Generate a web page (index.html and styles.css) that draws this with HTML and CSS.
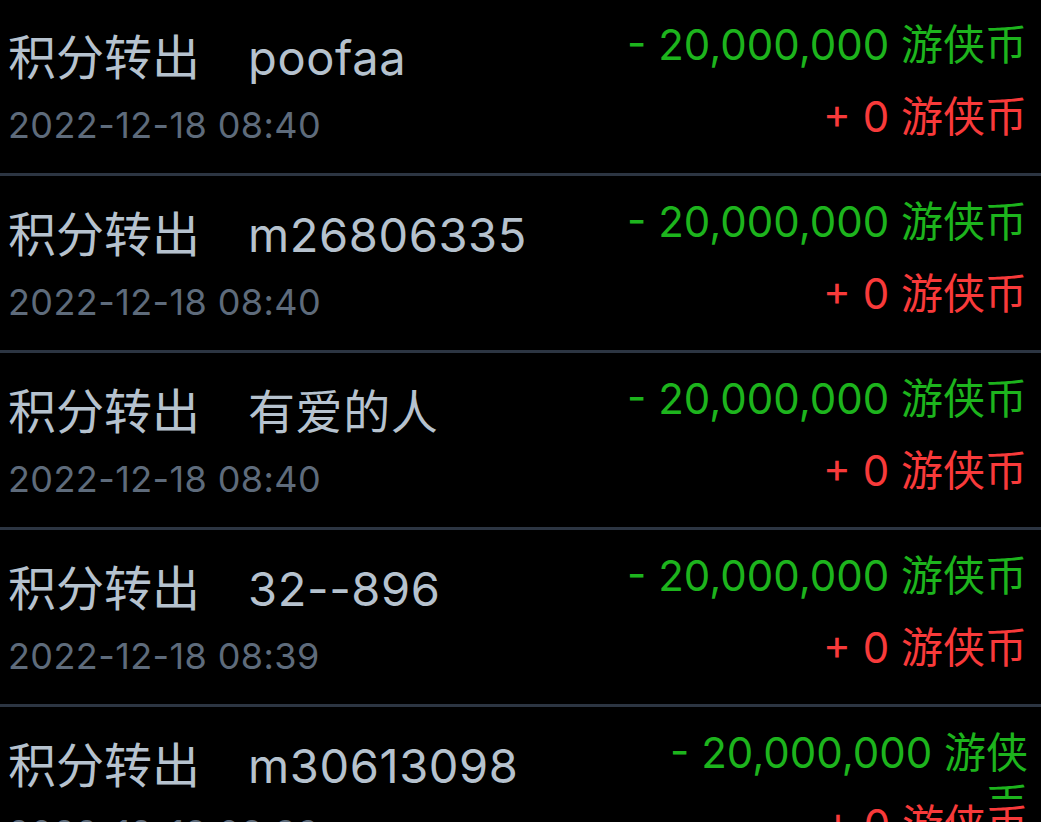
FILE: index.html
```html
<!DOCTYPE html>
<html lang="zh-CN">
<head>
    <meta charset="UTF-8">
    <meta name="viewport" content="width=device-width, initial-scale=1.0">
    <title>积分记录</title>
    <link rel="stylesheet" href="styles.css">
</head>
<body>
    <!-- 积分转出记录 -->
    <div class="record-list">
        <div class="record">
            <div class="record-left">
                <div class="record-title"><span class="record-type">积分转出</span><span class="record-target">poofaa</span></div>
                <div class="record-time">2022-12-18 08:40</div>
            </div>
            <div class="record-right">
                <div class="amount amount-out">- 20,000,000 <span class="coin">游侠币</span></div>
                <div class="amount amount-in">+ 0 <span class="coin">游侠币</span></div>
            </div>
        </div>

        <div class="record">
            <div class="record-left">
                <div class="record-title"><span class="record-type">积分转出</span><span class="record-target">m26806335</span></div>
                <div class="record-time">2022-12-18 08:40</div>
            </div>
            <div class="record-right">
                <div class="amount amount-out">- 20,000,000 <span class="coin">游侠币</span></div>
                <div class="amount amount-in">+ 0 <span class="coin">游侠币</span></div>
            </div>
        </div>

        <div class="record">
            <div class="record-left">
                <div class="record-title"><span class="record-type">积分转出</span><span class="record-target">有爱的人</span></div>
                <div class="record-time">2022-12-18 08:40</div>
            </div>
            <div class="record-right">
                <div class="amount amount-out">- 20,000,000 <span class="coin">游侠币</span></div>
                <div class="amount amount-in">+ 0 <span class="coin">游侠币</span></div>
            </div>
        </div>

        <div class="record">
            <div class="record-left">
                <div class="record-title"><span class="record-type">积分转出</span><span class="record-target">32--896</span></div>
                <div class="record-time">2022-12-18 08:39</div>
            </div>
            <div class="record-right">
                <div class="amount amount-out">- 20,000,000 <span class="coin">游侠币</span></div>
                <div class="amount amount-in">+ 0 <span class="coin">游侠币</span></div>
            </div>
        </div>

        <div class="record record-narrow">
            <div class="record-left">
                <div class="record-title"><span class="record-type">积分转出</span><span class="record-target">m30613098</span></div>
                <div class="record-time">2022-12-18 08:39</div>
            </div>
            <div class="record-right">
                <div class="amount amount-out">- 20,000,000 <span class="coin">游侠币</span></div>
                <div class="amount amount-in">+ 0 <span class="coin">游侠币</span></div>
            </div>
        </div>
    </div>
</body>
</html>
```

FILE: styles.css
```css
html, body {
    overflow: hidden;
}
body {
    margin: 0;
    padding: 0;
    background-color: #000; /* 黑色背景 */
    font-family: Inter, "Noto Sans CJK SC", sans-serif;
}
.record-list {
    margin-top: -1px;
}
.record {
    display: flex;
    justify-content: space-between;
    height: 174px;
    padding: 0 14px 0 8px;
    border-bottom: 3px solid #2c3542; /* 分隔线 */
}
.record-left {
    padding-top: 31px;
}
.record-title {
    color: #b6c2ce;
    font-size: 47px;
    line-height: 56px;
    letter-spacing: 0.6px;
    white-space: nowrap;
}
.record-type {
    font-size: 48px;
    letter-spacing: 0;
    margin-right: 48px;
}
.record-time {
    margin-top: 17px;
    color: #5e6b7b; /* 灰色时间 */
    font-size: 36px;
    line-height: 44px;
    letter-spacing: 0.4px;
}
.record-right {
    padding-top: 20px;
    text-align: right;
}
.amount {
    font-size: 42px;
    line-height: 51px;
    height: 51px;
    white-space: nowrap;
}
.amount-out {
    color: #1db41d; /* 绿色支出 */
}
.amount-in {
    margin-top: 21px;
    color: #f83a3a; /* 红色收入 */
    background-color: #000;
    position: relative;
}
.coin {
    font-size: 42px;
}
/* 最后一行右侧变窄，文字折行 */
.record-narrow {
    padding-right: 13px;
}
.record-narrow .record-right {
    width: 362px;
}
.record-narrow .amount-out {
    white-space: normal;
}
```
